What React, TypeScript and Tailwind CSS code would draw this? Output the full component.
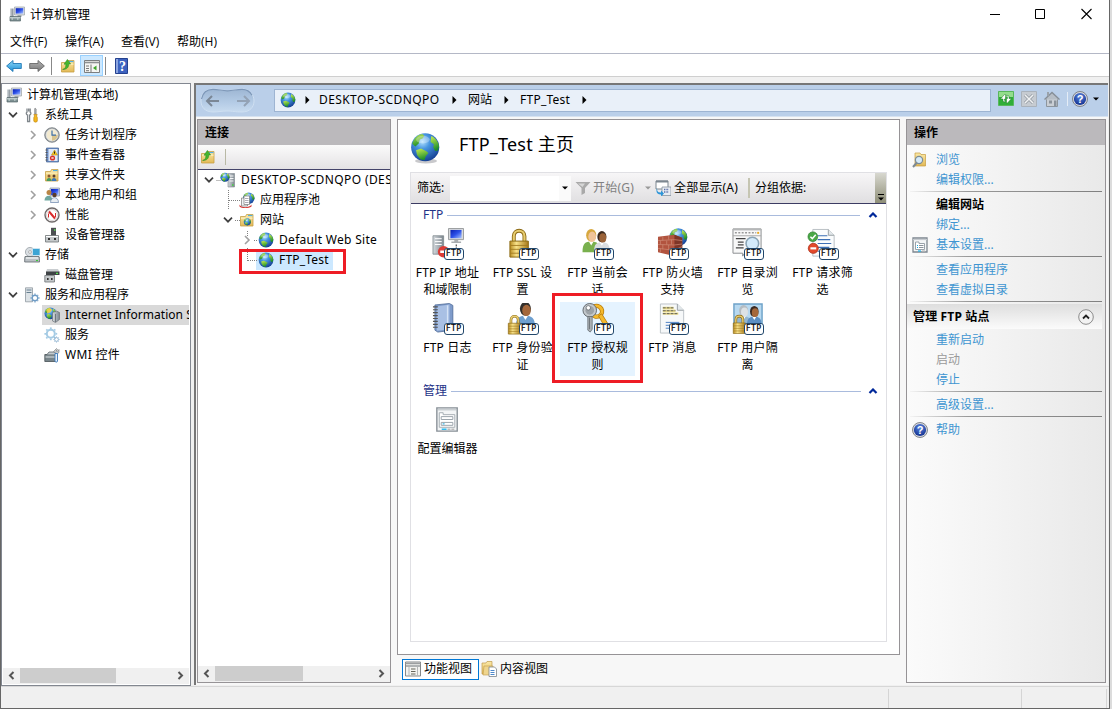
import React from "react";

const ui = "font-['Noto_Sans','Noto_Sans_CJK_SC',sans-serif]";

function Svg({ s = 16, vb = 16, children, className = "" }: any) {
  return (
    <svg width={s} height={s} viewBox={`0 0 ${vb} ${vb}`} className={"block shrink-0 " + className}>
      {children}
    </svg>
  );
}

function Defs() {
  return (
    <svg width="0" height="0" className="absolute">
      <defs>
        <radialGradient id="sea" cx="0.4" cy="0.3" r="0.75">
          <stop offset="0" stopColor="#b5e2ff" />
          <stop offset="0.35" stopColor="#4796e0" />
          <stop offset="1" stopColor="#123a8f" />
        </radialGradient>
        <linearGradient id="land" x1="0" y1="0" x2="0.3" y2="1">
          <stop offset="0" stopColor="#c9ee52" />
          <stop offset="1" stopColor="#1f8f2b" />
        </linearGradient>
        <linearGradient id="gold" x1="0" y1="0" x2="1" y2="0">
          <stop offset="0" stopColor="#b98d22" />
          <stop offset="0.35" stopColor="#f8e289" />
          <stop offset="1" stopColor="#a8791a" />
        </linearGradient>
        <linearGradient id="folder" x1="0" y1="0" x2="0" y2="1">
          <stop offset="0" stopColor="#fbe9a8" />
          <stop offset="1" stopColor="#e2b956" />
        </linearGradient>
        <linearGradient id="steel" x1="0" y1="0" x2="1" y2="0">
          <stop offset="0" stopColor="#d5dade" />
          <stop offset="1" stopColor="#7c868e" />
        </linearGradient>
        <linearGradient id="screen" x1="0" y1="0" x2="1" y2="1">
          <stop offset="0" stopColor="#0a1fb0" />
          <stop offset="0.5" stopColor="#2c50e8" />
          <stop offset="1" stopColor="#a9c4ff" />
        </linearGradient>
        <linearGradient id="bluearrow" x1="0" y1="0" x2="0" y2="1">
          <stop offset="0" stopColor="#8fd8f8" />
          <stop offset="1" stopColor="#1b8fd6" />
        </linearGradient>
        <linearGradient id="grayarrow" x1="0" y1="0" x2="0" y2="1">
          <stop offset="0" stopColor="#b5b5b5" />
          <stop offset="1" stopColor="#777" />
        </linearGradient>
        <linearGradient id="pod" x1="0" y1="0" x2="0" y2="1">
          <stop offset="0" stopColor="#9db6d3" />
          <stop offset="0.6" stopColor="#b5cce6" />
          <stop offset="1" stopColor="#c8dbef" />
        </linearGradient>
        <radialGradient id="helpg" cx="0.5" cy="0.3" r="0.7">
          <stop offset="0" stopColor="#5b86e0" />
          <stop offset="1" stopColor="#12308f" />
        </radialGradient>
      </defs>
    </svg>
  );
}

const GlobeShapes = () => (
  <>
    <circle cx="8" cy="8" r="7.4" fill="url(#sea)" />
    <path d="M1.2 6.2C2 3.4 4 1.4 6.4 1l1.2 1-1 1.4-1.4.6L4.6 6 2.8 7.6z" fill="url(#land)" />
    <path d="M3.2 9.6l2.6-.9 2.8 1.4 1.1 1-1.4 1.6-.7 2.2-2.2-.6-1.7-2.2z" fill="url(#land)" />
    <path d="M11.2 2.1c2.2 1 3.900 3.200 4.100 5.500l-.6 2.200-1.500.2-1-2 .4-1.600-1.800-1.200z" fill="url(#land)" />
    <ellipse cx="6.800" cy="4" rx="3.600" ry="2" fill="#fff" opacity="0.3" />
  </>
);
const Globe = ({ s = 16 }: { s?: number }) => (
  <Svg s={s}>
    <GlobeShapes />
  </Svg>
);
const FolderShape = () => (
  <>
    <path d="M1.500 4.500h5l1-2h6.500v11.500H1.500z" fill="url(#folder)" stroke="#c79f45" strokeWidth="0.800" />
    <path d="M9 3.600h4.500" stroke="#3fa9e8" strokeWidth="1" />
    <path d="M2 6.200h11.600" stroke="#fff6cf" strokeWidth="0.800" />
  </>
);
const FolderUp = ({ s = 16 }: { s?: number }) => (
  <Svg s={s}>
    <FolderShape />
    <path d="M2.600 11.400C5 10.800 6 9.200 5.900 6.200H4L7.400 1.400 10.600 6H8.800C8.800 9.600 6.400 11.800 2.600 11.400z" fill="#45b52d" stroke="#23841a" strokeWidth="0.500" />
  </Svg>
);
const Computer = () => (
  <Svg>
    <path d="M5.500 1h10v8h-10z" fill="#dde1e4" stroke="#9aa0a6" strokeWidth="0.700" />
    <path d="M6.700 2.200h7.600v5.400H6.700z" fill="url(#screen)" />
    <path d="M8.500 9h4v2h-4z" fill="#a5abb0" />
    <path d="M1 2.500h3.500v9H1z" fill="url(#steel)" />
    <path d="M1 10.500h10.500v4.500H1z" fill="#7d9092" stroke="#56696c" strokeWidth="0.700" />
    <path d="M2.500 13h1.500M8 13h1.500M1 11.800h10.500" stroke="#dce6e6" strokeWidth="1" />
  </Svg>
);
const Tools = () => (
  <Svg>
    <path d="M3 1.500v3.600c-1.200.6-.9 2.600.6 3V14.500h2V8.100c1.500-.5 1.700-2.400.6-3V1.500M4.700 1.500v3" fill="none" stroke="#7f868b" strokeWidth="1.300" />
    <path d="M11 1l1.200 1v5h-1.600V2z" fill="#a9afb4" stroke="#777" strokeWidth="0.500" />
    <path d="M9.800 7.500h3.400l-.7 1.500.8 1.500v3.500c0 1.500-3.500 1.500-3.500 0v-3.500l.8-1.500z" fill="#f5b81d" stroke="#b57a06" strokeWidth="0.600" />
  </Svg>
);
const Clock = () => (
  <Svg>
    <circle cx="8" cy="8" r="7.300" fill="#9a9fa3" stroke="#747a7e" strokeWidth="0.800" />
    <circle cx="8" cy="8" r="5.900" fill="#f3ead0" stroke="#e6e8e9" strokeWidth="0.800" />
    <path d="M8 8h5.800A5.800 5.800 0 0 1 8 13.800z" fill="#d9c48d" />
    <path d="M8 3.500v4.700h4" fill="none" stroke="#3c6fa8" strokeWidth="1.200" />
  </Svg>
);
const EventViewer = () => (
  <Svg>
    <path d="M2.500 1h12v14h-12z" fill="#6c8fcb" stroke="#44618f" strokeWidth="0.700" />
    <path d="M4.500 2h9v12h-9z" fill="#dfe8f6" />
    <path d="M1.500 3h2M1.500 5.500h2M1.500 8h2M1.500 10.500h2M1.500 13h2" stroke="#555" />
    <path d="M10.500 3l3 5H7.500z" fill="#f7c821" stroke="#a98205" strokeWidth="0.500" />
    <path d="M10.500 4.500v2.200" stroke="#222" />
    <circle cx="8.500" cy="11" r="2.600" fill="#d8332c" />
    <path d="M7.500 10l2 2M9.500 10l-2 2" stroke="#fff" strokeWidth="0.800" />
  </Svg>
);
const SharedFolder = () => (
  <Svg>
    <FolderShape />
    <circle cx="5" cy="9" r="1.500" fill="#8a5a33" />
    <circle cx="10" cy="9" r="1.500" fill="#5a4030" />
    <path d="M2.500 14c0-4 5-4 5 0z" fill="#469a5e" />
    <path d="M7.500 14c0-4 5-4 5 0z" fill="#3f78b5" />
  </Svg>
);
const Users = () => (
  <Svg>
    <path d="M6 1h9.500v8H6z" fill="#d5dbe4" stroke="#8591a3" strokeWidth="0.700" />
    <path d="M7 2h7.500v6H7z" fill="url(#screen)" />
    <circle cx="5" cy="5.500" r="2.500" fill="#b98545" />
    <path d="M.5 13.500c0-6.500 8-6.500 8 0z" fill="#6fa7a0" />
    <circle cx="10.500" cy="8" r="2.200" fill="#5b3c2a" />
    <path d="M6.500 15.500c0-6.500 8-6.500 8 0z" fill="#e8edf2" stroke="#6782aa" strokeWidth="0.700" />
  </Svg>
);
const Perf = () => (
  <Svg>
    <circle cx="8" cy="8" r="7" fill="#fff" stroke="#6f6a6a" strokeWidth="1.400" />
    <circle cx="8" cy="8" r="5.500" fill="#fff" stroke="#c9c1c1" strokeWidth="0.700" />
    <path d="M4.500 10.500V6.500M11.500 10V6" stroke="#d8292a" strokeWidth="1" />
    <path d="M5 4.500l6 7" stroke="#d8292a" strokeWidth="2" />
  </Svg>
);
const Device = () => (
  <Svg>
    <path d="M7 .8h5v8H7z" fill="#4c4f52" />
    <path d="M10 3h1.500" stroke="#5fe05a" strokeWidth="1.400" />
    <path d="M1.500 8.500h13v6.500h-13z" fill="#c4c8ca" stroke="#6e7376" strokeWidth="0.800" />
    <path d="M4 11h2v2H4zM10 11h2v2h-2z" fill="#333" />
    <path d="M2 9.500h12" stroke="#fff" />
  </Svg>
);
const Storage = () => (
  <Svg>
    <circle cx="6" cy="5" r="4.600" fill="#d9dee2" stroke="#8e969c" strokeWidth="0.700" />
    <circle cx="6" cy="5" r="1.400" fill="#fff" stroke="#888" strokeWidth="0.600" />
    <path d="M8.500 1.500H16v7H8.500z" fill="#3ba4d4" stroke="#d5e8f2" strokeWidth="0.800" />
    <path d="M1 9.500h14l.6 2v3.500H.7v-3.500z" fill="#b9bfc3" stroke="#5f676c" strokeWidth="0.800" />
    <path d="M2 11h12" stroke="#f5f7f8" strokeWidth="1.300" />
    <path d="M12 13.500h2" stroke="#3dc93b" strokeWidth="1.200" />
  </Svg>
);
const Disk = () => (
  <Svg>
    <path d="M3 2h11l1.500 3H2z" fill="#c9cdd0" />
    <path d="M2 4.500h13.500V8H2z" fill="#3f4346" />
    <path d="M12 6.300h2" stroke="#57e052" strokeWidth="1.200" />
    <path d="M.8 8.500h9.700v6.500H.8z" fill="#c4c8ca" stroke="#6e7376" strokeWidth="0.800" />
    <path d="M3 11h1.600v2H3zM7 11h1.600v2H7z" fill="#333" />
  </Svg>
);
const GearShape = ({ x, y, r, c }: any) => (
  <g transform={`translate(${x} ${y})`}>
    <circle r={r} fill="none" stroke={c} strokeWidth={r * 0.5} />
    {[0, 45, 90, 135, 180, 225, 270, 315].map((a) => (
      <path key={a} d={`M0 ${-r * 1.2}V${-r * 1.6}`} stroke={c} strokeWidth={r * 0.45} transform={`rotate(${a})`} />
    ))}
  </g>
);
const ServerApp = () => (
  <Svg>
    <path d="M1.500.8h7v14h-7z" fill="#dce2e6" stroke="#8f999f" strokeWidth="0.800" />
    <path d="M2.500 3h5M2.500 5.500h5" stroke="#667f8f" strokeWidth="1.200" />
    <GearShape x={11} y={11} r={2.8} c="#6f9cc5" />
  </Svg>
);
const IIS = () => (
  <Svg>
    <g transform="scale(.8)">
      <GlobeShapes />
      <path d="M3 3.500l4-2.500 3 2-2 3.500-4 2z" fill="#f1cd35" opacity=".85" />
    </g>
    <path d="M8.500 5.500l4-1.500 3 1.500v7l-4 3-3-1.500z" fill="url(#steel)" stroke="#5f676c" strokeWidth="0.600" />
    <path d="M11.500 7v8" stroke="#545c61" strokeWidth="0.700" />
  </Svg>
);
const Services = () => (
  <Svg>
    <GearShape x={6.8} y={6.8} r={4} c="#a5cbe4" />
    <GearShape x={12.5} y={12.5} r={1.9} c="#8bb0cf" />
  </Svg>
);
const Wmi = () => (
  <Svg>
    <path d="M.8 7.500h12v7H.8z" fill="#78858b" stroke="#485156" strokeWidth="0.800" />
    <path d="M3 7.500l2-2.500h6l1.500 2.500" fill="#c5ccd0" stroke="#5b646a" strokeWidth="0.800" />
    <path d="M1.500 10h10.500" stroke="#dfe4e6" />
    <path d="M9.500 4.500l3-3 1 1-1.500 1.500h2l1-1.500v3l-2 1.500z" fill="#c5c9cc" stroke="#777" strokeWidth="0.600" />
    <path d="M11 6.500h2.500v7.500c0 1.500-2.500 1.500-2.500 0z" fill="#e9f2fa" stroke="#3b79bd" strokeWidth="0.900" />
  </Svg>
);
const ServerGlobe = () => (
  <Svg>
    <path d="M8 1.500h6.500V15H8z" fill="url(#steel)" stroke="#7f888e" strokeWidth="0.600" />
    <path d="M9.500 4h4M9.500 6.500h4M9.500 9h4" stroke="#fff" strokeWidth="0.900" />
    <path d="M12 13h1.500" stroke="#41d23d" strokeWidth="1.500" />
    <g transform="translate(0 .3) scale(.62)">
      <GlobeShapes />
    </g>
  </Svg>
);
const AppPool = () => (
  <Svg>
    <g transform="translate(3.500 0) scale(.78)">
      <GlobeShapes />
    </g>
    <path d="M.5 12.500c1.500 3.500 10 3.500 12 0v2c-3 2-10 2-12 0z" fill="#d53532" />
    <path d="M2.500 6h6v8h-6z" fill="#eef1f3" stroke="#777" strokeWidth="0.700" />
    <path d="M5 4h5.500v8.500H5z" fill="#fff" stroke="#777" strokeWidth="0.700" />
    <path d="M6 6.500h3.500M6 8.500h3.500M6 10.500h3.500" stroke="#889" strokeWidth="0.700" />
  </Svg>
);
const SiteFolder = () => (
  <Svg>
    <FolderShape />
    <g transform="translate(4.500 6) scale(.48)">
      <GlobeShapes />
    </g>
  </Svg>
);
const Help = ({ s = 16 }: { s?: number }) => (
  <Svg s={s}>
    <circle cx="8" cy="8" r="7.500" fill="#d7d9de" stroke="#6a6d75" strokeWidth="0.800" />
    <circle cx="8" cy="8" r="6.100" fill="url(#helpg)" />
    <text x="8" y="12" textAnchor="middle" fontSize="11" fontWeight="700" fill="#fff" fontFamily="Liberation Sans">
      ?
    </text>
  </Svg>
);
const Settings = () => (
  <Svg>
    <path d="M1 1h14v14H1z" fill="#f4f6f7" stroke="#7e8790" strokeWidth="1.300" />
    <path d="M1 2.500h14" stroke="#c6cbd0" strokeWidth="1.200" />
    <path d="M3.500 5h3.500v1.500h5.500v6h-9z" fill="#fff" stroke="#9aa3ab" />
    <path d="M7 8.500h4.500M7 10.500h4.500" stroke="#8a939b" />
    <path d="M5 8.500h1M5 10.500h1" stroke="#12a5e0" />
    <path d="M6 14h3" stroke="#19b4ee" strokeWidth="1.200" />
    <path d="M10 14h3" stroke="#bbb" strokeWidth="1.200" />
  </Svg>
);

const ChevDown = () => (
  <svg width="10" height="8" viewBox="0 0 10 8">
    <path d="M1 1.700l4 4 4-4" fill="none" stroke="#404040" strokeWidth="1.700" />
  </svg>
);
const ChevRight = () => (
  <svg width="8" height="10" viewBox="0 0 8 10">
    <path d="M2 1l4 4-4 4" fill="none" stroke="#a0a0a0" strokeWidth="1.600" />
  </svg>
);

function Row({ pad, chev, icon, text, sel = "", ls = "" }: any) {
  return (
    <div className={"flex h-5 shrink-0 items-center " + pad}>
      <span className="flex w-[22px] shrink-0 items-center justify-center">
        {chev === "d" ? <ChevDown /> : chev === "r" ? <ChevRight /> : null}
      </span>
      <span className={"flex h-5 items-center gap-[5px] whitespace-nowrap " + sel}>
        {icon}
        <span className={ls}>{text}</span>
      </span>
    </div>
  );
}

function ScrollBar({ thumb, className }: any) {
  return (
    <div className={"flex h-4 shrink-0 items-center bg-[#f0f0f0] " + className}>
      <svg width="17" height="16" viewBox="0 0 17 16" className="shrink-0">
        <path d="M10.500 4L7 7.500l3.500 3.500" fill="none" stroke="#555" strokeWidth="2" />
      </svg>
      <span className={"mb-px h-[15px] bg-[#cdcdcd] " + thumb} />
      <span className="flex-1" />
      <svg width="17" height="16" viewBox="0 0 17 16" className="shrink-0">
        <path d="M6.500 4L10 7.500l-3.500 3.500" fill="none" stroke="#555" strokeWidth="2" />
      </svg>
    </div>
  );
}

/* 32px feature pictures */
const LockShape = ({ x = 0, y = 0, k = 1 }: any) => (
  <g transform={`translate(${x} ${y}) scale(${k})`}>
    <path d="M6 16V9.500C6 2 17 2 17 9.500V16" fill="none" stroke="#8b6914" strokeWidth="4" />
    <path d="M6 16V9.500C6 2 17 2 17 9.500V16" fill="none" stroke="#e8cd70" strokeWidth="2.200" />
    <path d="M2 14.500h19V31H2z" fill="url(#gold)" stroke="#8b6914" strokeWidth="1" />
    <path d="M2.500 19h18M2.500 23h18M2.500 27h18" stroke="#a07a20" strokeWidth="0.900" />
  </g>
);
const Person = ({ x, y, k = 1, hair, skin, body }: any) => (
  <g transform={`translate(${x} ${y}) scale(${k})`}>
    <path d="M-9 23c0-9 3-11 9-11s9 2 9 11z" fill={body} />
    <path d="M-3 11l3 5 3-5z" fill="#fff" />
    <ellipse cx="0" cy="5.500" rx="5.200" ry="6.500" fill={hair} />
    <ellipse cx="1" cy="7" rx="4" ry="5.300" fill={skin} />
  </g>
);
const pics: Record<string, React.ReactNode> = {
  ip: (
    <>
      <path d="M1 8h11v19H1z" fill="url(#steel)" stroke="#7b858b" strokeWidth="0.800" />
      <path d="M3 11h7M3 14h7M3 17h7" stroke="#fff" strokeWidth="1" />
      <path d="M17 .5h15.500V12H17z" fill="#d9dbdc" stroke="#9a9d9f" />
      <path d="M19 2h11.500v8.500H19z" fill="url(#screen)" />
      <path d="M23 12h4v2h3v1.500H20V14h3z" fill="#a9adb0" />
      <path d="M25 17v5" stroke="#222" strokeDasharray="2 1" />
      <circle cx="12" cy="24.500" r="6" fill="#dc3b35" />
      <path d="M8.500 24.500h7" stroke="#fff" strokeWidth="2.600" />
    </>
  ),
  lock: <LockShape x={1} y={-1} />,
  users: (
    <>
      <Person x={9.5} y={2} hair="#d7a83f" skin="#f0c49a" body="#79b04e" />
      <Person x={20.5} y={4} k={0.9} hair="#3b2a20" skin="#9a6238" body="#dadde0" />
    </>
  ),
  wall: (
    <>
      <g transform="translate(12 -.5) scale(1.250)">
        <GlobeShapes />
      </g>
      <path d="M1 9l17-2 8 3v13l-8 6L1 25z" fill="#b2543f" />
      <path d="M18 7l8 3v13l-8 6z" fill="#7e3527" />
      <path d="M1 13l17-1 8 1M1 17l17 .5 8-1M1 21l17 2 8-4M6 9v4M12 8v4M3.500 13v4M10 13v4M15 12v5M6 17v5M12 17.500v5M3.500 21v4M15 23v5" stroke="#cf8d78" strokeWidth="0.700" fill="none" />
    </>
  ),
  browse: (
    <>
      <path d="M1 1h29v25H13l-2 3v-3H1z" fill="#f8f8f8" stroke="#8a8d8f" />
      <path d="M1 1.500h29" stroke="#b5b7b8" strokeWidth="2" />
      <path d="M3 5h22" stroke="#999" strokeWidth="1.600" strokeDasharray="2 1.500" />
      <path d="M1 8h29" stroke="#aaa" />
      <path d="M4 11h10M6 14.500h6M6 17.500h6M4 20.500h8" stroke="#444" strokeWidth="1.300" />
      <circle cx="21" cy="16" r="6.500" fill="#d4ebfb" stroke="#8aa4b5" strokeWidth="1.600" />
      <path d="M26 5h2" stroke="#e8a81b" strokeWidth="2" />
    </>
  ),
  request: (
    <>
      <path d="M6 1.500h16l6 6V29H6z" fill="#fafcfd" stroke="#b9bfc4" />
      <path d="M22 1.500v6h6" fill="#e3e8eb" stroke="#9aa1a6" />
      <path d="M11 8h10M11 12h13M11 16h14M11 20h12M11 24h8" stroke="#3c6fb5" strokeWidth="1.200" />
      <circle cx="6" cy="9" r="5" fill="#49a847" stroke="#2f7c30" strokeWidth="0.700" />
      <path d="M3.500 9l2 2 3.500-4" stroke="#fff" strokeWidth="1.600" fill="none" />
      <circle cx="6.500" cy="21" r="5.200" fill="#e2492b" stroke="#a52a14" strokeWidth="0.700" />
      <path d="M3.500 21h6" stroke="#fff" strokeWidth="2.200" />
    </>
  ),
  log: (
    <>
      <path d="M3 2l15-1.500 3.500 2V28L6 30l-3-2z" fill="#7e9bca" stroke="#4b6795" strokeWidth="0.800" />
      <path d="M5 3.500l13-2V27L5 28.500z" fill="#a9c0e4" />
      <path d="M16 2.500V27" stroke="#d5e2f5" strokeWidth="1.300" />
      <path d="M1 4h5M1 7h5M1 10h5M1 13h5M1 16h5M1 19h5M1 22h5M1 25h5" stroke="#555" strokeWidth="1.200" />
    </>
  ),
  auth: (
    <>
      <Person x={19} y={0} k={1.1} hair="#33302c" skin="#a5683b" body="#6fa0d0" />
      <LockShape x={0} y={11} k={0.68} />
    </>
  ),
  key: (
    <>
      <g transform="rotate(-32 16 8)">
        <circle cx="15" cy="8" r="5.500" fill="none" stroke="#b77c0d" strokeWidth="4.600" />
        <circle cx="15" cy="8" r="5.500" fill="none" stroke="#f5b92c" strokeWidth="3" />
        <path d="M14 13h4v15l-2 3-2.500-2z" fill="#f5b92c" stroke="#b77c0d" strokeWidth="0.800" />
      </g>
      <circle cx="8" cy="7.500" r="7" fill="#c3c8cc" stroke="#63696e" strokeWidth="1" />
      <circle cx="8" cy="7.500" r="4.500" fill="#9da3a8" />
      <circle cx="6.500" cy="5" r="2.300" fill="#fff" stroke="#63696e" strokeWidth="0.800" />
      <path d="M6 14h4.500v13l-2 3-2.500-2z" fill="#aeb4b9" stroke="#63696e" strokeWidth="0.800" />
      <path d="M7.800 15v12" stroke="#6b7176" />
    </>
  ),
  msg: (
    <>
      <path d="M3.500 1h17.500l6.500 6.500V31H3.500z" fill="#f6f8f9" stroke="#bcc2c6" />
      <path d="M21 1v6.500h6.500" fill="#e3e8eb" stroke="#9aa1a6" />
      <path d="M6 5h11M6 8h13M6 11h16" stroke="#efe08a" strokeWidth="2.400" />
      <path d="M6 5h11M6 8h13M6 11h16" stroke="#555" strokeWidth="1" strokeDasharray="3 1" />
      <path d="M9 20h14M9 23h6M9 26h6" stroke="#4a7fc4" />
    </>
  ),
  iso: (
    <>
      <path d="M2 1h29v23H2z" fill="#b8d9f0" stroke="#6fa3c9" strokeWidth="1.500" />
      <Person x={12} y={3} k={0.9} hair="#b5bcc2" skin="#dde2e5" body="#94b6d0" />
      <Person x={23} y={4} k={0.85} hair="#3a2a22" skin="#a5683b" body="#5b8fc4" />
      <LockShape x={0} y={11} k={0.66} />
    </>
  ),
  config: (
    <g transform="translate(4 3)">
      <path d="M1 1h21v24H1z" fill="#f3f5f6" stroke="#868e95" strokeWidth="1.400" />
      <path d="M1 3h21" stroke="#b5bbc0" />
      <path d="M3.500 6h4v2h12v13h-16z" fill="#fff" stroke="#a5adb4" />
      <path d="M5.500 10h12v3h-12zM5.500 16h12v3h-12z" fill="none" stroke="#9aa3aa" />
      <path d="M7 17.500h2" stroke="#12a5e0" />
      <path d="M6 23h5" stroke="#19b4ee" strokeWidth="1.400" />
      <path d="M12 23h7" stroke="#bbb" strokeWidth="1.400" strokeDasharray="3 1" />
    </g>
  ),
};

function Feature({ pic, lines, ftp = true, sel = false }: any) {
  return (
    <div className="h-[75px] w-[75px] shrink-0">
      <div className={"flex h-[74px] flex-col items-center " + (sel ? "bg-[#e5f3ff]" : "")}>
        <div className="relative h-[34px] w-[32px] pt-px">
          <svg width="32" height="32" viewBox="0 0 33 33" className="block">
            {pics[pic]}
          </svg>
          {ftp && (
            <span className="absolute top-[21px] left-[12px] flex h-[12px] w-[20px] items-center justify-center rounded-[3px] border border-[#21476b] bg-white pl-[0.5px] font-['DejaVu_Sans',sans-serif] text-[8px] leading-none tracking-[0.4px] text-black [-webkit-text-stroke:0.2px_black]">
              FTP
            </span>
          )}
        </div>
        <div className="mt-[3px] text-center leading-[17px] whitespace-nowrap">
          {lines.map((l: string) => (
            <div key={l} className={l.startsWith("FTP") ? "tracking-[0.2px]" : ""}>
              {l}
            </div>
          ))}
        </div>
      </div>
    </div>
  );
}

function Group({ label, line }: any) {
  return (
    <div className="flex h-[18px] items-center pl-[12px] text-[#1e3287]">
      <span className="whitespace-nowrap">{label}</span>
      <span className={"ml-[4px] h-px bg-[#a9bbdd] " + line} />
      <svg width="10" height="7" viewBox="0 0 10 7" className="mr-[8px] ml-auto">
        <path d="M1.500 5L5 1.500l3.500 3.500" fill="none" stroke="#00289a" strokeWidth="2.200" />
      </svg>
    </div>
  );
}

const features: [string, string[]][] = [
  ["ip", ["FTP IP 地址", "和域限制"]],
  ["lock", ["FTP SSL 设", "置"]],
  ["users", ["FTP 当前会", "话"]],
  ["wall", ["FTP 防火墙", "支持"]],
  ["browse", ["FTP 目录浏", "览"]],
  ["request", ["FTP 请求筛", "选"]],
  ["log", ["FTP 日志"]],
  ["auth", ["FTP 身份验", "证"]],
  ["key", ["FTP 授权规", "则"]],
  ["msg", ["FTP 消息"]],
  ["iso", ["FTP 用户隔", "离"]],
];

function Action({ icon, children, tone = "text-[#3e95d1]" }: any) {
  return (
    <div className="flex h-5 items-center pl-[5px]">
      <span className="flex w-[24px] shrink-0">{icon}</span>
      <span className={tone}>{children}</span>
    </div>
  );
}
const Sep = () => <div className="mt-px mr-[3px] mb-[3px] ml-[3px] h-px shrink-0 bg-linear-to-r from-[#f4f4f4] via-[#999] via-30% to-[#808080]" />;
const Tri = () => (
  <svg width="5" height="8" viewBox="0 0 5 8" className="shrink-0">
    <path d="M.5 0L4.500 4l-4 4z" fill="#000" />
  </svg>
);
const Caret = ({ c = "#000" }: any) => (
  <svg width="6" height="4" viewBox="0 0 6 4" className="shrink-0">
    <path d="M0 .5h6L3 3.500z" fill={c} />
  </svg>
);

export default function App() {
  return (
    <div className={"relative flex h-[709px] w-[1112px] overflow-hidden bg-[#dcdcdc] text-[12px] leading-[18px] text-black " + ui}>
      <Defs />
      <div className="flex h-[709px] w-[1110px] flex-col border-r border-b border-l border-[#666] bg-[#f0f0f0]">
        {/* title bar */}
        <div className="flex h-[28px] shrink-0 items-center bg-white pl-[8px]">
          <Computer />
          <span className="ml-[5px] pt-px">计算机管理</span>
          <svg width="110" height="20" viewBox="0 0 110 20" className="mr-[13px] ml-auto">
            <path d="M4 10.500h10" stroke="#000" />
            <path d="M49.500 5.500h9v9h-9z" fill="none" stroke="#000" />
            <path d="M95.500 5l10 10M105.500 5l-10 10" stroke="#000" strokeWidth="1.100" />
          </svg>
        </div>
        {/* menu */}
        <div className="flex h-[26px] shrink-0 items-center gap-[17px] border-b border-[#b4b8c6] bg-white pt-[2px] pl-[9px] font-['Open_Sans','Noto_Sans_CJK_SC',sans-serif]">
          <span className="w-[38px] whitespace-nowrap">文件(F)</span>
          <span className="w-[39px] whitespace-nowrap">操作(A)</span>
          <span className="w-[39px] whitespace-nowrap">查看(V)</span>
          <span className="whitespace-nowrap">帮助(H)</span>
        </div>
        {/* toolbar */}
        <div className="flex h-[23px] shrink-0 items-center border-b border-[#cfcfcf] bg-white pt-px pl-[5px]">
          <Svg>
            <path d="M.6 8l6.400-5.500V5.500h8.300v5H7V13.500z" fill="url(#bluearrow)" stroke="#2179b5" strokeWidth="0.900" />
          </Svg>
          <Svg className="ml-[7px]">
            <path d="M15.400 8L9 2.500V5.500H.7v5H9V13.500z" fill="url(#grayarrow)" stroke="#6a6a6a" strokeWidth="0.900" />
          </Svg>
          <span className="ml-[6px] h-[18px] w-px bg-[#888]" />
          <span className="ml-[8px]">
            <FolderUp />
          </span>
          <span className="ml-[4px] flex h-[21px] w-[23px] items-center justify-center border border-[#99d1ff] bg-[#cce8ff]">
            <Svg>
              <path d="M.5 2.500h15v12H.5z" fill="#f5f5f3" stroke="#7b7e80" />
              <path d="M.5 4.500h15" stroke="#8d9092" strokeWidth="1.600" />
              <path d="M2 8h3M2 10.500h3M2 12.700h3M7 6.500v8" stroke="#777" />
              <path d="M12.500 7.500v5l-3.500-2.500z" fill="#3fa52a" />
            </Svg>
          </span>
          <span className="ml-[2px] h-[18px] w-px bg-[#888]" />
          <svg width="13" height="16" viewBox="0 0 13 16" className="ml-[9px] shrink-0">
            <path d="M.5.5h12v15H.5z" fill="#3d62bf" stroke="#24418f" />
            <path d="M1 1h2v14H1z" fill="#8ca5df" />
            <text x="7.500" y="13" textAnchor="middle" fontSize="14" fontWeight="700" fill="#fff" fontFamily="Liberation Serif">
              ?
            </text>
          </svg>
        </div>

        {/* body */}
        <div className="flex h-[609px] shrink-0 pt-[6px]">
          {/* console tree */}
          <div className="flex h-[603px] w-[190px] shrink-0 flex-col overflow-hidden border border-[#828790] bg-white">
            <div className="flex h-[21px] shrink-0 items-center gap-[5px] pl-[4px]">
              <Computer />
              <span>计算机管理(本地)</span>
            </div>
            <Row chev="d" icon={<Tools />} text="系统工具" pad="" />
            <Row chev="r" icon={<Clock />} text="任务计划程序" pad="pl-[20px]" />
            <Row chev="r" icon={<EventViewer />} text="事件查看器" pad="pl-[20px]" />
            <Row chev="r" icon={<SharedFolder />} text="共享文件夹" pad="pl-[20px]" />
            <Row chev="r" icon={<Users />} text="本地用户和组" pad="pl-[20px]" />
            <Row chev="r" icon={<Perf />} text="性能" pad="pl-[20px]" />
            <Row icon={<Device />} text="设备管理器" pad="pl-[20px]" />
            <Row chev="d" icon={<Storage />} text="存储" pad="" />
            <Row icon={<Disk />} text="磁盘管理" pad="pl-[20px]" />
            <Row chev="d" icon={<ServerApp />} text="服务和应用程序" pad="" />
            <Row icon={<IIS />} text="Internet Information Services" pad="pl-[18px] mr-px overflow-hidden" sel="pl-[2px] bg-[#d9d9d9]" ls="tracking-[0.05px]" />
            <Row icon={<Services />} text="服务" pad="pl-[20px]" />
            <Row icon={<Wmi />} text="WMI 控件" pad="pl-[20px]" ls="tracking-[0.3px]" />
            <div className="flex-1" />
            <ScrollBar thumb="w-[96px]" className="mx-px mb-[1px]" />
          </div>

          {/* IIS snap-in */}
          <div className="ml-[3px] flex h-[602px] w-[914px] flex-col border-t-2 border-l-2 border-[#777] bg-[#f7f7f7]">
            <div className="flex h-[32px] shrink-0 items-center border-b border-[#d6e2f0] bg-[#bacfe9] pl-[3px]">
              <svg width="58" height="28" viewBox="0 0 58 28" className="shrink-0">
                <path d="M14 2C5 2 2 8 2 14s4 11 12 11c6 0 8-1 14-1s8 1 15 1c8 0 12-5 12-11S51 2 43 2c-6 0-8 1.500-14.500 1.500S20 2 14 2z" fill="url(#pod)" stroke="#cfe0f2" />
                <path d="M2.500 12C4 4 9 2.300 14 2.300c6 0 8 1.500 14.500 1.500S37 2.300 43 2.300c5 0 8 2 10 6" fill="none" stroke="#7d97b8" strokeWidth="1.200" />
                <path d="M8 14h12M13 9l-5 5 5 5" fill="none" stroke="#7b8796" strokeWidth="2" />
                <path d="M50 14H38M45 9l5 5-5 5" fill="none" stroke="#93a2b5" strokeWidth="2" />
              </svg>
              <div className="ml-[17px] flex h-[23px] w-[717px] items-center border border-[#9db4d2] bg-[#e9f0f9] pb-px pl-[5px] whitespace-nowrap">
                <Globe />
                <span className="flex w-[23px] justify-center">
                  <Tri />
                </span>
                <span className="w-[121px] tracking-[0.4px]">DESKTOP-SCDNQPO</span>
                <span className="flex w-[28px] justify-center">
                  <Tri />
                </span>
                <span className="w-[24px]">网站</span>
                <span className="flex w-[28px] justify-center">
                  <Tri />
                </span>
                <span className="w-[50px] tracking-[0.25px]">FTP_Test</span>
                <span className="flex w-[28px] justify-center">
                  <Tri />
                </span>
              </div>
              <Svg className="mb-[3px] ml-[7px]">
                <path d="M.5.500h15v14H.5z" fill="#2fae38" stroke="#58b75c" />
                <path d="M1 1h14v5H1z" fill="#93dd8c" />
                <path d="M6.500 3.500L2.500 8H5v2.500l2.500.5-1-2V8h1V3.500zM9.500 12l4-4.500H11V5L8.500 4l1 2.500v1h-1V12z" fill="#fff" stroke="#1f7a2a" strokeWidth="0.500" />
              </Svg>
              <Svg className="mb-[3px] ml-[7px]">
                <path d="M.5.500h15v15H.5z" fill="#c6cbd1" stroke="#aab2bb" />
                <path d="M4 4l8 8M12 4l-8 8" stroke="#8f969e" strokeWidth="3" />
                <path d="M4 4l8 8M12 4l-8 8" stroke="#f0f2f4" strokeWidth="1.600" />
              </Svg>
              <Svg className="mb-[3px] ml-[7px]">
                <path d="M2.500 8v7.500h11V8" fill="#c9ced4" stroke="#8d959d" />
                <path d="M.5 8.500L8 1.500l7.500 7" fill="#b6bdc5" stroke="#868e97" strokeWidth="1.300" />
                <path d="M3 1h2v4H3z" fill="#9aa2aa" />
                <path d="M5 9.500h3v3H5zM10 9.500h2.500v6H10z" fill="#8a929b" />
              </Svg>
              <span className="mb-[3px] ml-[7px] h-[14px] w-px bg-[#e4ecf6]" />
              <span className="mb-[3px] ml-[4px]">
                <Help />
              </span>
              <span className="mb-[3px] ml-[5px] flex">
                <Caret />
              </span>
            </div>

            <div className="flex pt-[2px]">
              {/* connections */}
              <div className="ml-[1px] flex h-[564px] w-[194px] shrink-0 flex-col overflow-hidden border border-[#969396] bg-white">
                <div className="flex h-[25px] shrink-0 items-center bg-[#bbb9bc] pl-[7px] font-bold">连接</div>
                <div className="flex h-[25px] shrink-0 items-center border-b border-[#44446a] bg-linear-to-b from-[#fbfbfb] to-[#e4e2e4] pl-[2px]">
                  <FolderUp />
                  <span className="ml-[9px] h-4 w-px bg-[#b9b9a5]" />
                </div>
                <div className="relative flex flex-col">
                  <svg width="80" height="100" viewBox="0 0 80 100" className="absolute top-0 left-0">
                    <path d="M18.500 10.500H23M30.500 20v20M31 30.500h11M37 50.500h5M49.500 61v5M49.500 78v13M50 90.500h10M56 70.500h4" stroke="#808080" strokeDasharray="1 1" fill="none" />
                  </svg>
                  <Row chev="d" icon={<ServerGlobe />} text="DESKTOP-SCDNQPO (DESKTOP-S" pad="" ls="tracking-[0.4px]" />
                  <Row icon={<AppPool />} text="应用程序池" pad="pl-[19px]" />
                  <Row chev="d" icon={<SiteFolder />} text="网站" pad="pl-[19px]" />
                  <Row chev="r" icon={<Globe />} text="Default Web Site" pad="pl-[38px]" ls="tracking-[0.3px]" />
                  <Row icon={<Globe />} text="FTP_Test" pad="pl-[36px]" sel="bg-[#cce8ff] pl-[2px] pr-[4px]" ls="tracking-[0.2px]" />
                  <div className="absolute top-[79px] left-[41px] h-[25px] w-[107px] border-3 border-[#ee1c25]" />
                </div>
                <div className="flex-1" />
                <ScrollBar thumb="w-[88px]" className="" />
              </div>

              {/* centre */}
              <div className="ml-[6px] flex h-[564px] w-[503px] shrink-0 flex-col">
                <div className="relative flex h-[536px] flex-col border border-[#969396] bg-white px-[12px]">
                  <div className="flex h-[52px] shrink-0 items-center pt-[3px]">
                    <svg width="32" height="32" viewBox="0 0 32 32" className="shrink-0">
                      <ellipse cx="16" cy="29" rx="11" ry="2.500" fill="#c9c9cc" />
                      <g transform="scale(1.900)">
                        <GlobeShapes />
                      </g>
                    </svg>
                    <span className="ml-[17px] pb-[7px] text-[18px] leading-[24px] tracking-[0.2px] whitespace-nowrap">FTP_Test 主页</span>
                  </div>
                  <div className="flex h-[470px] w-[477px] shrink-0 flex-col border border-[#e0e0e4]">
                    <div className="flex h-[31px] shrink-0 items-center border-b border-[#3c3c63] bg-linear-to-b from-[#f7f6f7] to-[#e0dfe1] pl-[6px] whitespace-nowrap">
                      <span className="w-[33px]">筛选:</span>
                      <span className="flex h-[25px] w-[121px] items-center justify-end bg-white">
                        <span className="flex h-full w-[12px] items-center justify-center bg-[#fafafa]">
                          <Caret />
                        </span>
                      </span>
                      <Svg className="ml-[4px]">
                        <path d="M.5 2h15l-5.500 6v5l-3.500 2V8z" fill="#a9a9a9" />
                        <path d="M3 3.500h7L7.500 7z" fill="#d6d6d6" />
                      </Svg>
                      <span className="ml-[2px] w-[52px] tracking-[0.2px] text-[#808080]">开始(G)</span>
                      <Caret c="#999" />
                      <Svg className="ml-[4px]">
                        <path d="M1 1h12v8H1z" fill="#fff" stroke="#7c8790" />
                        <path d="M1 1.500h12" stroke="#7c8790" strokeWidth="2" />
                        <path d="M7 7h9v8.500H7z" fill="#e8ecf2" stroke="#8793a0" strokeWidth="0.800" />
                        <path d="M9 9.500h5M9 12h5" stroke="#5a6fa8" strokeWidth="1.400" strokeDasharray="1.400 1" />
                        <path d="M2 8c0 4 1.500 4.500 4 4.500v-2L9 13.500l-3 3V14.500C2 14.500.5 12 2 8z" fill="#2c95d8" />
                      </Svg>
                      <span className="ml-[3px] w-[66px] tracking-[0.15px]">全部显示(A)</span>
                      <span className="ml-[8px] h-[20px] w-[2px] bg-[#c5c5b2]" />
                      <span className="ml-[5px]">分组依据:</span>
                      <span className="ml-auto flex h-full w-[11px] flex-col items-center justify-end gap-[2px] bg-linear-to-b from-[#d8d8d0] to-[#8f8f78] pb-[2px]">
                        <span className="h-px w-[6px] bg-black" />
                        <Caret />
                      </span>
                    </div>
                    <div className="h-[2px]" />
                    <Group label="FTP" line="w-[413px]" />
                    <div className="-ml-px grid grid-cols-[repeat(6,75px)] pt-[3px]">
                      {features.map(([p, l]) => (
                        <Feature key={p} pic={p} lines={l} sel={p === "key"} />
                      ))}
                    </div>
                    <div className="h-[5px]" />
                    <Group label="管理" line="w-[410px]" />
                    <div className="-ml-px flex pt-[3px]">
                      <Feature pic="config" lines={["配置编辑器"]} ftp={false} />
                    </div>
                  </div>
                  <div className="absolute top-[173px] left-[154px] h-[90px] w-[91px] border-3 border-[#ee1c25]" />
                </div>
                <div className="flex h-[28px] items-center pl-[5px]">
                  <span className="flex h-[21px] w-[77px] items-center gap-[3px] border border-[#0078d7] bg-white pl-[2px] whitespace-nowrap">
                    <Svg>
                      <path d="M.5 1h15v14H.5z" fill="#f3f3f0" stroke="#85888a" />
                      <path d="M.5 2.500h15M1 5h14" stroke="#9b9ea0" strokeWidth="1.400" />
                      <path d="M4 6v9M12.500 6v9" stroke="#b5b7b8" />
                      <path d="M6 8h4.500M6 10.500h4.500M6 13h4.500" stroke="#66665b" strokeWidth="1.100" />
                    </Svg>
                    功能视图
                  </span>
                  <span className="ml-[2px] flex items-center gap-[3px] whitespace-nowrap">
                    <Svg>
                      <path d="M1 2h4l1-1.500h5V13H1z" fill="url(#folder)" stroke="#bf9a4a" strokeWidth="0.700" />
                      <path d="M3 5h9v9H2z" fill="#efd58d" stroke="#bf9a4a" strokeWidth="0.600" />
                      <path d="M8 6h5.500l2 2v7.500H8z" fill="#fff" stroke="#7d858b" strokeWidth="0.800" />
                      <path d="M9.500 9.500h4M9.500 11.500h4M9.500 13.500h4" stroke="#3b7cc4" strokeWidth="0.900" />
                    </Svg>
                    内容视图
                  </span>
                </div>
              </div>

              {/* actions */}
              <div className="ml-[6px] flex h-[564px] w-[200px] shrink-0 flex-col border border-[#969396] bg-linear-to-r from-[#fbfbfb] to-[#e9e9e9]">
                <div className="mb-[5px] flex h-[25px] shrink-0 items-center bg-[#bbb9bc] pl-[7px] font-bold">操作</div>
                <Action
                  icon={
                    <Svg>
                      <path d="M3 1h5l1 1.500h4.500V14H3z" fill="url(#folder)" stroke="#c59c3d" strokeWidth="0.700" />
                      <circle cx="7" cy="8" r="3.600" fill="#d6ebf9" stroke="#7b8c98" strokeWidth="1.200" />
                      <path d="M4.500 11L1 15" stroke="#7d8a94" strokeWidth="2" />
                    </Svg>
                  }
                >
                  浏览
                </Action>
                <Action>编辑权限...</Action>
                <Sep />
                <Action tone="font-bold text-black">编辑网站</Action>
                <Action>绑定...</Action>
                <Action icon={<Settings />}>基本设置...</Action>
                <Sep />
                <Action>查看应用程序</Action>
                <Action>查看虚拟目录</Action>
                <Sep />
                <div className="mr-[3px] -mt-px mb-px flex h-[25px] shrink-0 items-center justify-between bg-linear-to-b from-[#dedede] to-[#fbfbfb] pr-[8px] pl-[6px] font-bold">
                  <span className="tracking-[0.15px]">管理 FTP 站点</span>
                  <Svg s={16}>
                    <circle cx="8" cy="8" r="7.300" fill="#f2f2f2" stroke="#808080" strokeWidth="0.900" />
                    <path d="M5 9.500l3-3 3 3" fill="none" stroke="#222" strokeWidth="1.800" />
                  </Svg>
                </div>
                <Action>重新启动</Action>
                <Action tone="text-[#9a9a9a]">启动</Action>
                <Action>停止</Action>
                <Sep />
                <Action>高级设置...</Action>
                <Sep />
                <Action icon={<Help />}>帮助</Action>
              </div>
            </div>
          </div>
        </div>

        {/* status bar */}
        <div className="flex h-[22px] shrink-0 border-t border-[#d7d7d7] pt-[2px]">
          <span className="ml-[887px] h-[19px] w-px bg-[#d5d5d5]" />
          <span className="ml-[132px] h-[19px] w-px bg-[#d5d5d5]" />
          <span className="ml-[84px] h-[19px] w-px bg-[#d5d5d5]" />
        </div>
      </div>
    </div>
  );
}
